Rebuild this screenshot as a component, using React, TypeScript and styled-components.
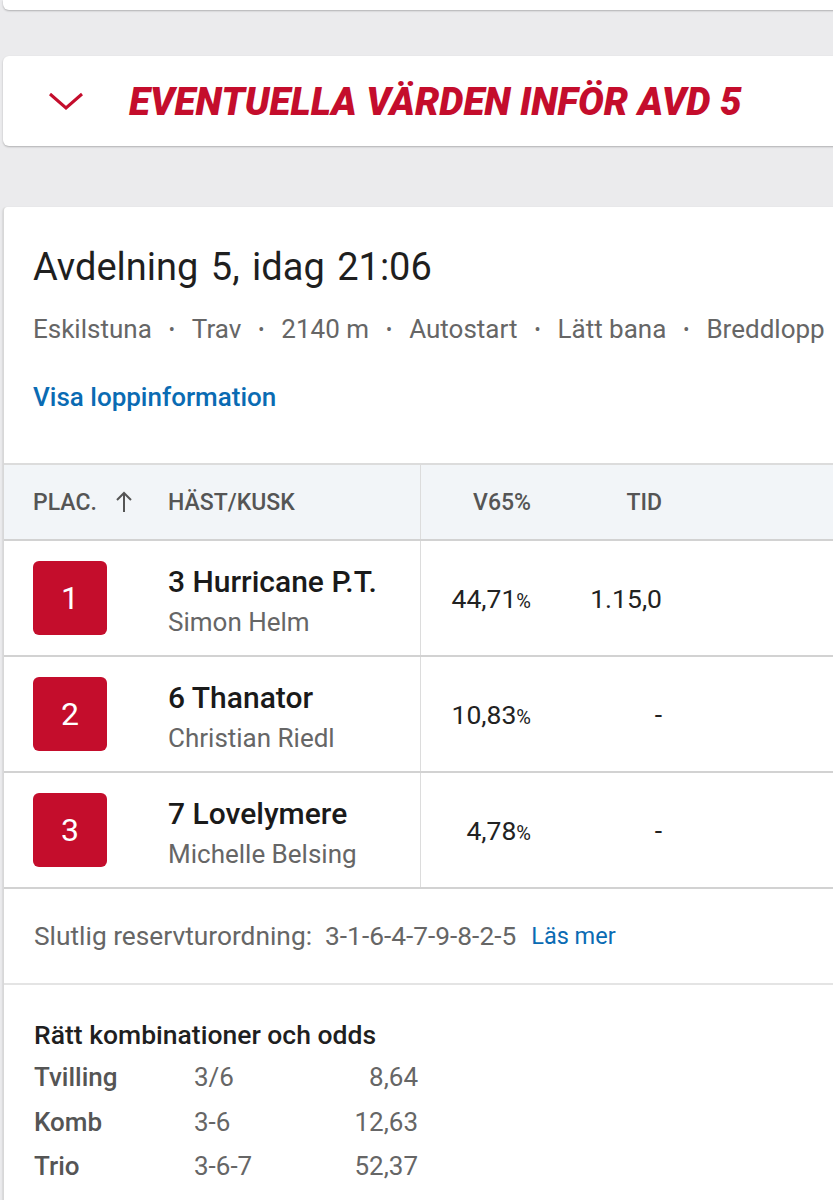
import React from 'react'
import styled, { createGlobalStyle } from 'styled-components'

const GlobalStyle = createGlobalStyle`
  html, body {
    margin: 0;
    padding: 0;
    background: #ebebed;
    font-family: Roboto, "Noto Sans", sans-serif;
    overflow-x: hidden;
  }
`

const RED = '#c40d2c'
const BLUE = '#0a6bb3'

const Page = styled.div`
  width: 833px;
  padding: 0 0 0 3px;
  box-sizing: border-box;
  overflow: hidden;
`

const Card = styled.div`
  background: #fff;
  border-radius: 6px 0 0 6px;
  margin-right: -20px;
  box-shadow: 0 1px 2px rgba(0, 0, 0, 0.25);
`

const TopStub = styled(Card)`
  height: 10px;
  border-radius: 0 0 0 6px;
`

const Accordion = styled(Card)`
  margin-top: 46px;
  height: 90px;
  display: flex;
  align-items: center;
  gap: 45px;
  padding-left: 45px;
`

const AccTitle = styled.h2`
  margin: 0;
  color: ${RED};
  font-size: 38.5px;
  font-weight: 900;
  font-style: italic;
  letter-spacing: 0;
  white-space: nowrap;
`

const Race = styled(Card)`
  margin-top: 61px;
  padding-top: 37px;
  border-left: 1px solid #d8d8d8;
  border-radius: 4px 0 0 0;
`

const Head = styled.div`
  padding: 0 0 0 29px;
`

const Title = styled.h1`
  margin: 0;
  font-size: 38px;
  line-height: 46px;
  font-weight: 400;
  color: #1f1f1f;
  word-spacing: 3px;
`

const Meta = styled.div`
  margin-top: 22px;
  font-size: 26px;
  line-height: 34px;
  color: #666;
  white-space: nowrap;
  span.dot {
    margin: 0 17px;
    font-size: 18px;
    vertical-align: 2px;
  }
`

const Link = styled.a`
  display: inline-block;
  margin-top: 33px;
  font-size: 26px;
  line-height: 34px;
  font-weight: 500;
  color: ${BLUE};
`

const Grid = styled.div<{ $head?: boolean }>`
  display: grid;
  grid-template-columns: 164px 252px 111px 131px 1fr;
  height: ${p => (p.$head ? 74 : 114)}px;
  background: ${p => (p.$head ? '#f2f5f8' : '#fff')};
  border-top: ${p => (p.$head ? '2px solid #dcdcdc' : 'none')};
  border-bottom: 2px solid #d2d2d2;
  align-items: center;
`

const Table = styled.div`
  margin-top: 49px;
`

const Cell = styled.div<{ $right?: boolean; $divider?: boolean }>`
  height: 100%;
  display: flex;
  align-items: center;
  justify-content: ${p => (p.$right ? 'flex-end' : 'flex-start')};
  box-sizing: border-box;
  border-left: ${p => (p.$divider ? '1px solid #dcdcdc' : 'none')};
`

const FirstCell = styled(Cell)`
  padding-left: 29px;
`

const HeadText = styled.span`
  font-size: 23px;
  font-weight: 500;
  color: #555;
  display: flex;
  align-items: center;
  gap: 19px;
`

const Badge = styled.div`
  width: 74px;
  height: 74px;
  border-radius: 6px;
  background: ${RED};
  color: #fff;
  font-size: 32px;
  display: flex;
  align-items: center;
  justify-content: center;
`

const Horse = styled.div`
  display: flex;
  flex-direction: column;
  justify-content: center;
  gap: 7px;
  padding-top: 6px;
`

const HorseName = styled.div`
  font-size: 30px;
  line-height: 34px;
  font-weight: 500;
  color: #1a1a1a;
`

const Driver = styled.div`
  font-size: 26px;
  line-height: 32px;
  color: #666;
`

const Value = styled.span`
  font-size: 26.5px;
  color: #222;
  small {
    font-size: 20px;
  }
`

const Reserve = styled.div`
  height: 94px;
  display: flex;
  align-items: center;
  padding-left: 30px;
  border-bottom: 2px solid #e4e4e4;
  font-size: 26.3px;
  color: #666;
  white-space: pre;
  a {
    color: ${BLUE};
    font-size: 23.5px;
    margin-left: 15px;
  }
`

const Odds = styled.div`
  padding: 34px 0 20px 30px;
`

const OddsTitle = styled.div`
  font-size: 26.5px;
  line-height: 32px;
  font-weight: 500;
  color: #1f1f1f;
`

const OddsTable = styled.div`
  margin-top: 4px;
  display: grid;
  grid-template-columns: 160px 120px 104px;
  grid-auto-rows: 44.5px;
  align-items: center;
  font-size: 26px;
  color: #666;
  b {
    font-weight: 500;
    color: #555;
  }
  span:nth-child(3n) {
    text-align: right;
  }
`

const Chevron = () => (
  <svg width="36" height="20" viewBox="0 0 36 20">
    <path d="M2 3 L18 17 L34 3" fill="none" stroke={RED} strokeWidth="3" />
  </svg>
)

const ArrowUp = () => (
  <svg width="16" height="22" viewBox="0 0 16 22">
    <path d="M8 21 V2 M1 9 L8 2 L15 9" fill="none" stroke="#555" strokeWidth="2" />
  </svg>
)

const results = [
  { place: 1, horse: '3 Hurricane P.T.', driver: 'Simon Helm', pct: '44,71', time: '1.15,0' },
  { place: 2, horse: '6 Thanator', driver: 'Christian Riedl', pct: '10,83', time: '-' },
  { place: 3, horse: '7 Lovelymere', driver: 'Michelle Belsing', pct: '4,78', time: '-' },
]

const meta = ['Eskilstuna', 'Trav', '2140 m', 'Autostart', 'Lätt bana', 'Breddlopp', '']

const odds = [
  ['Tvilling', '3/6', '8,64'],
  ['Komb', '3-6', '12,63'],
  ['Trio', '3-6-7', '52,37'],
]

export default function App() {
  return (
    <Page>
      <GlobalStyle />
      <TopStub />
      <Accordion>
        <Chevron />
        <AccTitle>EVENTUELLA VÄRDEN INFÖR AVD 5</AccTitle>
      </Accordion>
      <Race>
        <Head>
          <Title>Avdelning 5, idag 21:06</Title>
          <Meta>
            {meta.map((m, i) => (
              <React.Fragment key={i}>
                {i > 0 && <span className="dot">•</span>}
                {m}
              </React.Fragment>
            ))}
          </Meta>
          <Link>Visa loppinformation</Link>
        </Head>
        <Table>
          <Grid $head>
            <FirstCell>
              <HeadText>PLAC. <ArrowUp /></HeadText>
            </FirstCell>
            <Cell><HeadText>HÄST/KUSK</HeadText></Cell>
            <Cell $right $divider><HeadText>V65%</HeadText></Cell>
            <Cell $right><HeadText>TID</HeadText></Cell>
            <Cell />
          </Grid>
          {results.map(r => (
            <Grid key={r.place}>
              <FirstCell><Badge>{r.place}</Badge></FirstCell>
              <Cell>
                <Horse>
                  <HorseName>{r.horse}</HorseName>
                  <Driver>{r.driver}</Driver>
                </Horse>
              </Cell>
              <Cell $right $divider><Value>{r.pct}<small>%</small></Value></Cell>
              <Cell $right><Value>{r.time}</Value></Cell>
              <Cell />
            </Grid>
          ))}
        </Table>
        <Reserve>
          Slutlig reservturordning:  3-1-6-4-7-9-8-2-5<a>Läs mer</a>
        </Reserve>
        <Odds>
          <OddsTitle>Rätt kombinationer och odds</OddsTitle>
          <OddsTable>
            {odds.map(o => (
              <React.Fragment key={o[0]}>
                <b>{o[0]}</b>
                <span>{o[1]}</span>
                <span>{o[2]}</span>
              </React.Fragment>
            ))}
          </OddsTable>
        </Odds>
      </Race>
    </Page>
  )
}
